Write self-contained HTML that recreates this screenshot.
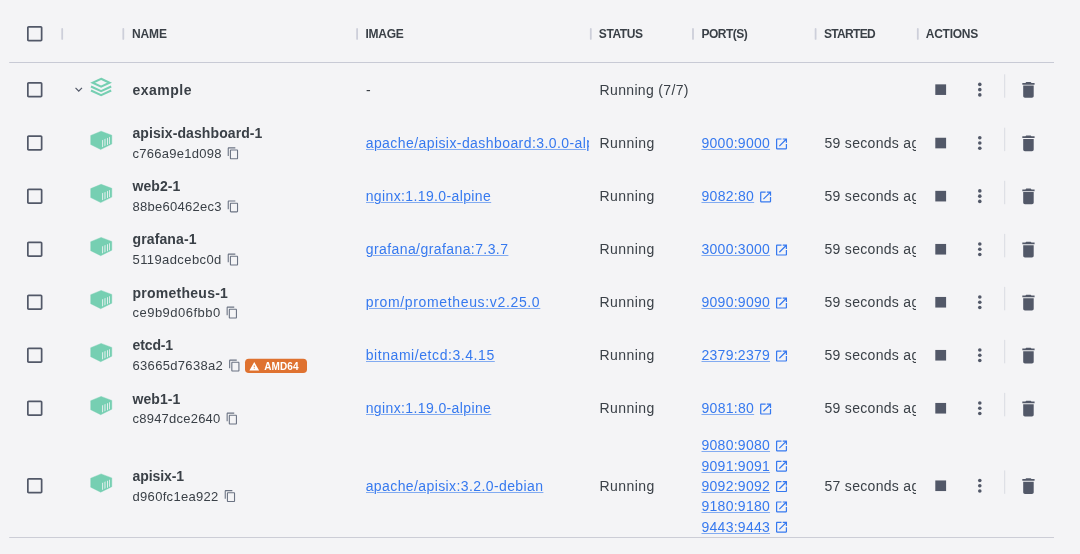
<!DOCTYPE html>
<html lang="en">
<head>
<meta charset="utf-8">
<title>Containers</title>
<style>
html,body{margin:0;padding:0;}
body{width:1080px;height:554px;overflow:hidden;background:#f4f4f6;font-family:"Liberation Sans",sans-serif;color:#3a4047;position:relative;}
#root{position:absolute;left:0;top:0;width:1080px;height:554px;will-change:transform;}
#shapes{position:absolute;left:0;top:0;width:1080px;height:554px;display:block;}
.hdr{position:absolute;top:26px;height:16px;line-height:16px;font-size:12px;font-weight:bold;color:#3a4047;white-space:nowrap;}
.name{position:absolute;left:132.5px;font-size:14px;font-weight:bold;line-height:20px;height:20px;white-space:nowrap;color:#3a4047;}
.cid{position:absolute;left:132.5px;font-size:13px;line-height:18px;height:18px;white-space:nowrap;color:#3a4047;}
.img{position:absolute;left:365.7px;width:223.4px;overflow:hidden;font-size:14px;line-height:20px;height:20px;white-space:nowrap;}
a{color:#3679ef;text-decoration:underline;text-decoration-thickness:1px;text-underline-offset:1px;text-decoration-color:rgba(54,121,239,.6);}
.st{position:absolute;left:599.6px;font-size:14px;line-height:20px;height:20px;white-space:nowrap;}
.pt{position:absolute;left:701.5px;font-size:14px;line-height:20px;height:20px;white-space:nowrap;}
.tm{position:absolute;left:824.5px;width:91.5px;overflow:hidden;font-size:14px;line-height:20px;height:20px;white-space:nowrap;}
.bt{position:absolute;left:264.2px;height:14px;line-height:14px;font-size:10px;font-weight:bold;color:#fff;letter-spacing:0.1px;white-space:nowrap;}
</style>
</head>
<body>
<div id="root">
<svg id="shapes" viewBox="0 0 1080 554" width="1080" height="554">
<defs>
<path id="cb" fill="#525868" d="M19 5v14H5V5h14m0-2H5c-1.1 0-2 .9-2 2v14c0 1.1.9 2 2 2h14c1.1 0 2-.9 2-2V5c0-1.1-.9-2-2-2z"/>
<path id="cp" fill="#6b7383" d="M16 1H4c-1.1 0-2 .9-2 2v14h2V3h12V1zm3 4H8c-1.1 0-2 .9-2 2v14c0 1.1.9 2 2 2h11c1.1 0 2-.9 2-2V7c0-1.1-.9-2-2-2zm0 16H8V7h11v14z"/>
<path id="op" fill="#3679ef" d="M19 19H5V5h7V3H5c-1.11 0-2 .9-2 2v14c0 1.1.89 2 2 2h14c1.1 0 2-.9 2-2v-7h-2v7zM14 3v2h3.59l-9.83 9.83 1.41 1.41L19 6.41V10h2V3h-7z"/>
<path id="del" fill="#525868" d="M6 19c0 1.1.9 2 2 2h8c1.1 0 2-.9 2-2V7H6v12zM19 4h-3.5l-1-1h-5l-1 1H5v2h14V4z"/>
<path id="exp" fill="#525868" d="M16.59 8.59 12 13.17 7.41 8.59 6 10l6 6 6-6z"/>
<g id="ct"><path fill="#76cfb2" stroke="#76cfb2" stroke-width="0.4" stroke-linejoin="round" d="M10.8 0.5 L21.5 4.5 L21.5 13.3 L10.4 18.8 L0.4 13.8 L0.4 4.8Z"/><path fill="#f4f4f6" fill-opacity="0.85" d="M11.8 9.5 l1 -0.45 v7 l-1 0.45 z"/><path fill="#f4f4f6" fill-opacity="0.6" d="M13.9 8.6 l1.5 -0.68 v7 l-1.5 0.68 z"/><path fill="#f4f4f6" fill-opacity="0.85" d="M16.7 7.5 l1 -0.45 v7 l-1 0.45 z"/><path fill="#f4f4f6" fill-opacity="0.85" d="M18.8 6.5 l0.9 -0.41 v7 l-0.9 0.41 z"/></g>
<g id="stk" fill="none" stroke="#76cfb2" stroke-width="2.1"><path d="M11.1 1.85 L19.5 5.78 L11.1 9.7 L2.7 5.78 Z"/><path d="M1 9.55 L11.1 14.15 L21.2 9.55"/><path d="M1 13.6 L11.1 18.2 L21.2 13.6"/></g>
<g id="kb" fill="#525868"><circle cx="0" cy="-5.25" r="1.8"/><circle cx="0" cy="0" r="1.8"/><circle cx="0" cy="5.25" r="1.8"/></g>
</defs>
<use href="#cb" transform="translate(24.41 23.46) scale(0.8613)"/>
<rect x="61.3" y="28" width="1.8" height="11.8" fill="#cdcfda" rx="0.9"/>
<rect x="122.4" y="28" width="1.8" height="11.8" fill="#cdcfda" rx="0.9"/>
<rect x="356.2" y="28" width="1.8" height="11.8" fill="#cdcfda" rx="0.9"/>
<rect x="589.9" y="28" width="1.8" height="11.8" fill="#cdcfda" rx="0.9"/>
<rect x="692.1" y="28" width="1.8" height="11.8" fill="#cdcfda" rx="0.9"/>
<rect x="814.7" y="28" width="1.8" height="11.8" fill="#cdcfda" rx="0.9"/>
<rect x="916.9" y="28" width="1.8" height="11.8" fill="#cdcfda" rx="0.9"/>
<rect x="9.2" y="62" width="1044.8" height="1" fill="#c8cad5"/>
<use href="#cb" transform="translate(24.41 79.37) scale(0.8613)"/>
<use href="#exp" transform="translate(71.45 82.2) scale(0.6083)"/>
<use href="#stk" transform="translate(90 76.95)"/>
<rect x="935.3" y="84.35" width="10.8" height="10.6" fill="#525868"/>
<use href="#kb" transform="translate(979.8 89.65)"/>
<rect x="1004.2" y="74.3" width="1" height="23.4" fill="#d9dbe2"/>
<use href="#del" transform="translate(1017.95 79.4) scale(0.875)"/>
<use href="#cb" transform="translate(24.41 132.76) scale(0.8613)"/>
<use href="#ct" transform="translate(90.3 130.7)"/>
<use href="#cp" transform="translate(226.61 146.8) scale(0.5458)"/>
<use href="#op" transform="translate(774.16 136.55) scale(0.6125)"/>
<rect x="935.3" y="137.75" width="10.8" height="10.6" fill="#525868"/>
<use href="#kb" transform="translate(979.8 143.05)"/>
<rect x="1004.2" y="127.7" width="1" height="23.4" fill="#d9dbe2"/>
<use href="#del" transform="translate(1017.95 132.8) scale(0.875)"/>
<use href="#cb" transform="translate(24.41 185.86) scale(0.8613)"/>
<use href="#ct" transform="translate(90.3 183.8)"/>
<use href="#cp" transform="translate(226.61 199.9) scale(0.5458)"/>
<use href="#op" transform="translate(758.26 189.65) scale(0.6125)"/>
<rect x="935.3" y="190.85" width="10.8" height="10.6" fill="#525868"/>
<use href="#kb" transform="translate(979.8 196.15)"/>
<rect x="1004.2" y="180.8" width="1" height="23.4" fill="#d9dbe2"/>
<use href="#del" transform="translate(1017.95 185.9) scale(0.875)"/>
<use href="#cb" transform="translate(24.41 238.97) scale(0.8613)"/>
<use href="#ct" transform="translate(90.3 236.9)"/>
<use href="#cp" transform="translate(226.61 253) scale(0.5458)"/>
<use href="#op" transform="translate(774.16 242.75) scale(0.6125)"/>
<rect x="935.3" y="243.95" width="10.8" height="10.6" fill="#525868"/>
<use href="#kb" transform="translate(979.8 249.25)"/>
<rect x="1004.2" y="233.9" width="1" height="23.4" fill="#d9dbe2"/>
<use href="#del" transform="translate(1017.95 239) scale(0.875)"/>
<use href="#cb" transform="translate(24.41 291.97) scale(0.8613)"/>
<use href="#ct" transform="translate(90.3 289.9)"/>
<use href="#cp" transform="translate(225.51 306) scale(0.5458)"/>
<use href="#op" transform="translate(774.16 295.75) scale(0.6125)"/>
<rect x="935.3" y="296.95" width="10.8" height="10.6" fill="#525868"/>
<use href="#kb" transform="translate(979.8 302.25)"/>
<rect x="1004.2" y="286.9" width="1" height="23.4" fill="#d9dbe2"/>
<use href="#del" transform="translate(1017.95 292) scale(0.875)"/>
<use href="#cb" transform="translate(24.41 344.97) scale(0.8613)"/>
<use href="#ct" transform="translate(90.3 342.9)"/>
<use href="#cp" transform="translate(228.01 359) scale(0.5458)"/>
<rect x="245" y="358.65" width="62" height="14.4" fill="#df7230" rx="3.8"/>
<path fill="#fff" transform="translate(248.96 361.12) scale(0.4409)" d="M1 21h22L12 2 1 21zm12-3h-2v-2h2v2zm0-4h-2v-4h2v4z"/>
<use href="#op" transform="translate(774.16 348.75) scale(0.6125)"/>
<rect x="935.3" y="349.95" width="10.8" height="10.6" fill="#525868"/>
<use href="#kb" transform="translate(979.8 355.25)"/>
<rect x="1004.2" y="339.9" width="1" height="23.4" fill="#d9dbe2"/>
<use href="#del" transform="translate(1017.95 345) scale(0.875)"/>
<use href="#cb" transform="translate(24.41 397.97) scale(0.8613)"/>
<use href="#ct" transform="translate(90.3 395.9)"/>
<use href="#cp" transform="translate(225.51 412) scale(0.5458)"/>
<use href="#op" transform="translate(758.26 401.75) scale(0.6125)"/>
<rect x="935.3" y="402.95" width="10.8" height="10.6" fill="#525868"/>
<use href="#kb" transform="translate(979.8 408.25)"/>
<rect x="1004.2" y="392.9" width="1" height="23.4" fill="#d9dbe2"/>
<use href="#del" transform="translate(1017.95 398) scale(0.875)"/>
<use href="#cb" transform="translate(24.41 475.47) scale(0.8613)"/>
<use href="#ct" transform="translate(90.3 473.4)"/>
<use href="#cp" transform="translate(223.61 489.5) scale(0.5458)"/>
<use href="#op" transform="translate(774.16 438.65) scale(0.6125)"/>
<use href="#op" transform="translate(774.16 458.95) scale(0.6125)"/>
<use href="#op" transform="translate(774.16 479.25) scale(0.6125)"/>
<use href="#op" transform="translate(774.16 499.55) scale(0.6125)"/>
<use href="#op" transform="translate(774.16 519.85) scale(0.6125)"/>
<rect x="935.3" y="480.45" width="10.8" height="10.6" fill="#525868"/>
<use href="#kb" transform="translate(979.8 485.75)"/>
<rect x="1004.2" y="470.4" width="1" height="23.4" fill="#d9dbe2"/>
<use href="#del" transform="translate(1017.95 475.5) scale(0.875)"/>
<rect x="9.2" y="537" width="1044.8" height="1" fill="#cccdd6"/>
</svg>
<div class="hdr" style="left:131.9px;letter-spacing:-0.095px">NAME</div>
<div class="hdr" style="left:365.6px;letter-spacing:-0.319px">IMAGE</div>
<div class="hdr" style="left:598.8px;letter-spacing:-0.422px">STATUS</div>
<div class="hdr" style="left:701.5px;letter-spacing:-0.528px">PORT(S)</div>
<div class="hdr" style="left:823.9px;letter-spacing:-0.658px">STARTED</div>
<div class="hdr" style="left:925.8px;letter-spacing:-0.277px">ACTIONS</div>

<!-- example -->
<div class="name" style="top:80px;letter-spacing:0.487px">example</div>
<div class="st" style="top:80px;left:366px">-</div>
<div class="st" style="top:80px;letter-spacing:0.334px">Running (7/7)</div>

<!-- apisix-dashboard-1 -->
<div class="name" style="top:123px;letter-spacing:0.088px">apisix-dashboard-1</div>
<div class="cid" style="top:145px;letter-spacing:0.258px">c766a9e1d098</div>
<div class="img" style="top:133px;letter-spacing:0.425px"><a>apache/apisix-dashboard:3.0.0-alpine</a></div>
<div class="st" style="top:133px;letter-spacing:0.407px">Running</div>
<div class="pt" style="top:133px;letter-spacing:0.261px"><a>9000:9000</a></div>
<div class="tm" style="top:133px;letter-spacing:0.3px">59 seconds ago</div>

<!-- web2-1 -->
<div class="name" style="top:176px;letter-spacing:0.08px">web2-1</div>
<div class="cid" style="top:198px;letter-spacing:0.258px">88be60462ec3</div>
<div class="img" style="top:186px;letter-spacing:0.378px"><a>nginx:1.19.0-alpine</a></div>
<div class="st" style="top:186px;letter-spacing:0.407px">Running</div>
<div class="pt" style="top:186px;letter-spacing:0.291px"><a>9082:80</a></div>
<div class="tm" style="top:186px;letter-spacing:0.3px">59 seconds ago</div>

<!-- grafana-1 -->
<div class="name" style="top:229px;letter-spacing:0.127px">grafana-1</div>
<div class="cid" style="top:251px;letter-spacing:0.406px">5119adcebc0d</div>
<div class="img" style="top:239px;letter-spacing:0.42px"><a>grafana/grafana:7.3.7</a></div>
<div class="st" style="top:239px;letter-spacing:0.407px">Running</div>
<div class="pt" style="top:239px;letter-spacing:0.261px"><a>3000:3000</a></div>
<div class="tm" style="top:239px;letter-spacing:0.3px">59 seconds ago</div>

<!-- prometheus-1 -->
<div class="name" style="top:283px;letter-spacing:0.255px">prometheus-1</div>
<div class="cid" style="top:304px;letter-spacing:0.477px">ce9b9d06fbb0</div>
<div class="img" style="top:292px;letter-spacing:0.656px"><a>prom/prometheus:v2.25.0</a></div>
<div class="st" style="top:292px;letter-spacing:0.407px">Running</div>
<div class="pt" style="top:292px;letter-spacing:0.261px"><a>9090:9090</a></div>
<div class="tm" style="top:292px;letter-spacing:0.3px">59 seconds ago</div>

<!-- etcd-1 -->
<div class="name" style="top:335px;letter-spacing:-0.115px">etcd-1</div>
<div class="cid" style="top:357px;letter-spacing:0.317px">63665d7638a2</div>
<div class="bt" style="top:360px">AMD64</div>
<div class="img" style="top:345px;letter-spacing:0.568px"><a>bitnami/etcd:3.4.15</a></div>
<div class="st" style="top:345px;letter-spacing:0.407px">Running</div>
<div class="pt" style="top:345px;letter-spacing:0.261px"><a>2379:2379</a></div>
<div class="tm" style="top:345px;letter-spacing:0.3px">59 seconds ago</div>

<!-- web1-1 -->
<div class="name" style="top:389px;letter-spacing:0.08px">web1-1</div>
<div class="cid" style="top:410px;letter-spacing:0.226px">c8947dce2640</div>
<div class="img" style="top:398px;letter-spacing:0.383px"><a>nginx:1.19.0-alpine</a></div>
<div class="st" style="top:398px;letter-spacing:0.407px">Running</div>
<div class="pt" style="top:398px;letter-spacing:0.291px"><a>9081:80</a></div>
<div class="tm" style="top:398px;letter-spacing:0.3px">59 seconds ago</div>

<!-- apisix-1 -->
<div class="name" style="top:466px;letter-spacing:-0.085px">apisix-1</div>
<div class="cid" style="top:488px;letter-spacing:0.312px">d960fc1ea922</div>
<div class="img" style="top:476px;letter-spacing:0.398px"><a>apache/apisix:3.2.0-debian</a></div>
<div class="st" style="top:476px;letter-spacing:0.407px">Running</div>
<div class="pt" style="top:435px;letter-spacing:0.261px"><a>9080:9080</a></div>
<div class="pt" style="top:456px;letter-spacing:0.261px"><a>9091:9091</a></div>
<div class="pt" style="top:476px;letter-spacing:0.261px"><a>9092:9092</a></div>
<div class="pt" style="top:496px;letter-spacing:0.261px"><a>9180:9180</a></div>
<div class="pt" style="top:517px;letter-spacing:0.261px"><a>9443:9443</a></div>
<div class="tm" style="top:476px;letter-spacing:0.3px">57 seconds ago</div>
</div>
</body>
</html>
